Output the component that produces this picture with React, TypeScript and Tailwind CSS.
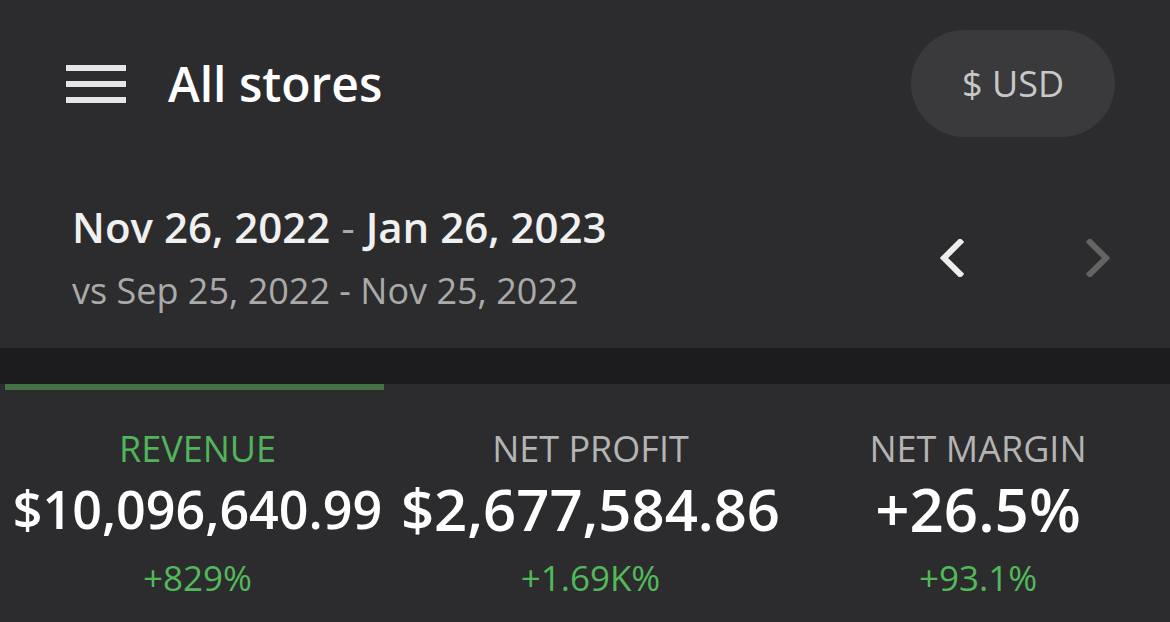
import { useState } from "react";

const stats = [
  { label: "REVENUE", value: "$10,096,640.99", change: "+829%", size: "text-[52px]" },
  { label: "NET PROFIT", value: "$2,677,584.86", change: "+1.69K%", size: "text-[58px]" },
  { label: "NET MARGIN", value: "+26.5%", change: "+93.1%", size: "text-[60px]" },
];

function Chevron({ dir, color }: { dir: "left" | "right"; color: string }) {
  return (
    <svg width="24" height="38" viewBox="0 0 24 38" fill="none">
      <polyline
        points={dir === "left" ? "20,3 4,19 20,35" : "4,3 20,19 4,35"}
        stroke={color}
        strokeWidth="6"
        strokeLinecap="square"
      />
    </svg>
  );
}

export default function App() {
  const [active, setActive] = useState(0);

  return (
    <div className="h-[622px] w-full overflow-hidden bg-[#2c2c2e] font-['Open_Sans',sans-serif]">
      {/* top bar */}
      <div className="flex h-[137px] items-center justify-between pl-[66px] pr-[55px] pt-[30px]">
        <div className="flex items-center gap-[42px]">
          <div className="flex w-[60px] flex-col gap-[10px]">
            <span className="h-[6px] bg-[#e6e6e6]" />
            <span className="h-[6px] bg-[#e6e6e6]" />
            <span className="h-[6px] bg-[#e6e6e6]" />
          </div>
          <h1 className="text-[48px] font-semibold leading-none text-white">All stores</h1>
        </div>
        <button className="flex h-[107px] w-[204px] items-center justify-center rounded-full bg-[#3a3a3c] text-[36px] leading-none text-[#c8c8c8]">
          $ USD
        </button>
      </div>

      {/* date range */}
      <div className="flex h-[211px] items-start justify-between pl-[72px] pr-[60px]">
        <div className="mt-[69px] flex flex-col gap-[25px]">
          <div className="text-[42px] font-semibold leading-none text-[#f0f0f0]">
            Nov 26, 2022<span className="font-normal text-[#aaaaaa]"> - </span>Jan 26, 2023
          </div>
          <div className="text-[36px] leading-none text-[#aaaaaa]">vs Sep 25, 2022 - Nov 25, 2022</div>
        </div>
        <div className="flex items-center gap-[122px] self-center pt-[30px]">
          <Chevron dir="left" color="#eeeeee" />
          <Chevron dir="right" color="#646464" />
        </div>
      </div>

      <div className="h-[36px] bg-[#1c1c1e]" />

      {/* stats tabs */}
      <div className="grid grid-cols-[395px_391px_1fr]">
        {stats.map((s, i) => (
          <div key={s.label} className="flex cursor-pointer flex-col items-center" onClick={() => setActive(i)}>
            <div className={`ml-[5px] mr-[11px] h-[6px] self-stretch ${active === i ? "bg-[#447246]" : ""}`} />
            <div
              className={`mt-[41px] whitespace-nowrap text-[36px] leading-none ${
                active === i ? "text-[#52b45a]" : "text-[#b4b4b4]"
              }`}
            >
              {s.label}
            </div>
            <div className="mt-[16px] flex h-[52px] items-center">
              <span className={`whitespace-nowrap font-semibold leading-none text-white ${s.size}`}>{s.value}</span>
            </div>
            <div className="mt-[25px] whitespace-nowrap text-[35px] leading-none text-[#52b95a]">{s.change}</div>
          </div>
        ))}
      </div>
    </div>
  );
}
